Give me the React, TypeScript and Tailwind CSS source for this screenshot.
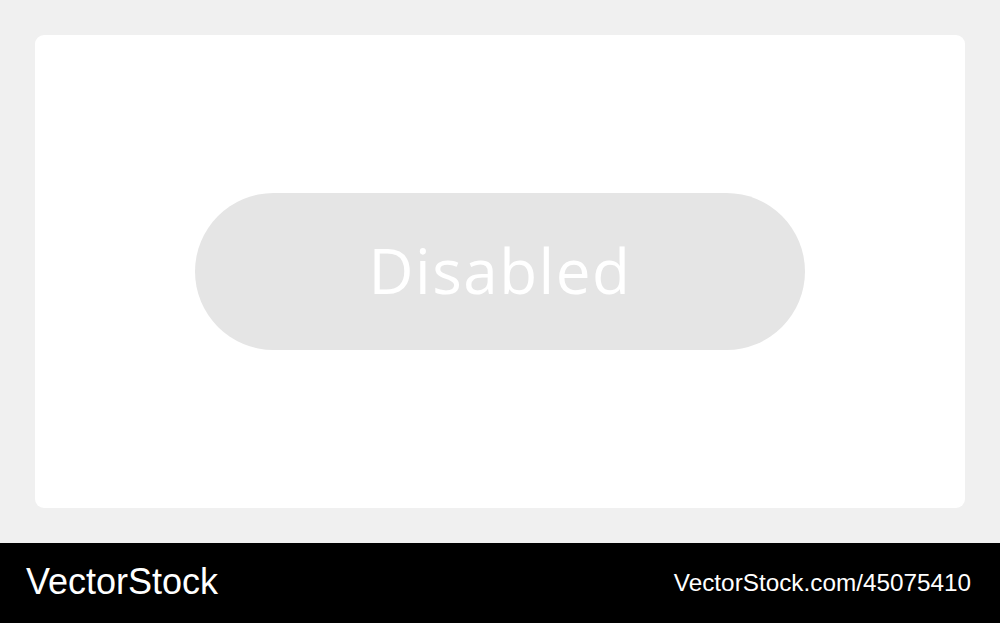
import React from 'react';

export default function App() {
  return (
    <div className="w-[1000px] h-[623px] flex flex-col bg-[#f0f0f0] overflow-hidden">
      <div className="h-[543px] p-[35px] flex">
        <div className="flex-1 bg-white rounded-[9px] flex items-center justify-center">
          <button
            type="button"
            disabled
            className="w-[610px] h-[157px] rounded-full bg-[#e5e5e5] text-white text-[62px] font-['Open_Sans',Lato,sans-serif] font-medium tracking-[1.5px] pb-[2px] cursor-not-allowed"
          >
            Disabled
          </button>
        </div>
      </div>
      <div className="h-[80px] bg-black flex items-center justify-between pl-[26px] pr-[29px] text-white font-['Liberation_Sans',Arial,sans-serif]">
        <span className="text-[36px] tracking-[0px] pb-[2px]">VectorStock</span>
        <span className="text-[24.3px]">VectorStock.com/45075410</span>
      </div>
    </div>
  );
}
